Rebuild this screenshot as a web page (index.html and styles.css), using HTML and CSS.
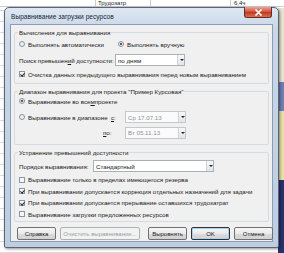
FILE: index.html
```html
<!DOCTYPE html>
<html lang="ru">
<head>
<meta charset="utf-8">
<title>Выравнивание загрузки ресурсов</title>
<link rel="stylesheet" href="styles.css">
</head>
<body>
<div class="sheet">
  <div class="sheet-head">
    <span class="cell c-a"></span>
    <span class="cell c-b">Трудозатр</span>
    <span class="cell c-c"></span>
    <span class="cell c-d">6,4ч</span>
  </div>
  <div class="sheet-right"></div>
</div>

<div class="window">
  <div class="titlebar">
    <span class="title">Выравнивание загрузки ресурсов</span>
    <span class="close"><svg width="9" height="7" viewBox="0 0 9 7"><path d="M1.5 0.5 L7.5 6.5 M7.5 0.5 L1.5 6.5" stroke="#fff" stroke-width="1.6"/></svg></span>
  </div>
  <div class="client">
    <fieldset class="group g1">
      <legend>Вычисления для выравнивания</legend>
      <div class="row">
        <label class="opt w-auto"><span class="radio"></span>Выполнять автоматически</label>
        <label class="opt"><span class="radio on"></span>Выполнять вручную</label>
      </div>
      <div class="row row-field">
        <span class="lbl w-search">Поиск превышен<u>и</u>й доступности:</span>
        <span class="select s-days"><span class="val">по дням</span><span class="arrow"></span></span>
      </div>
      <div class="row">
        <label class="opt"><span class="check on"></span>Очистка данных предыдущего выравнивания перед новым выравниванием</label>
      </div>
    </fieldset>

    <fieldset class="group g2">
      <legend>Диапазон выравнивания для проекта "Пример Курсовая"</legend>
      <div class="row">
        <label class="opt"><span class="radio on"></span>Выравнивание во все<u>м</u> проекте</label>
      </div>
      <div class="row row-field">
        <label class="opt w-range"><span class="radio"></span>Выравнивание в диапазоне</label>
        <span class="lbl w-from"><u>с</u>:</span>
        <span class="select s-date disabled"><span class="val">Ср 17.07.13</span><span class="arrow"></span></span>
      </div>
      <div class="row row-field r-to">
        <span class="spacer w-range-to"></span>
        <span class="lbl w-to"><u>п</u>о:</span>
        <span class="select s-date disabled"><span class="val">Вт 05.11.13</span><span class="arrow"></span></span>
      </div>
    </fieldset>

    <fieldset class="group g3">
      <legend>Устранение превышений доступности</legend>
      <div class="row row-field">
        <span class="lbl w-order">Порядок выравнивания:</span>
        <span class="select s-order"><span class="val">Стандартный</span><span class="arrow"></span></span>
      </div>
      <div class="checks">
        <label class="opt"><span class="check"></span>Выравнивание только в пределах имеющегося резерва</label>
        <label class="opt"><span class="check on"></span>При выравнивании допускается коррекция отдельных назначений для задачи</label>
        <label class="opt"><span class="check on"></span>При выравнивании допускается прерывание оставшихся трудозатрат</label>
        <label class="opt"><span class="check"></span>Выравнивание загрузки предложенных ресурсов</label>
      </div>
    </fieldset>

    <div class="buttons">
      <span class="btn b-help">Справка</span>
      <span class="btn b-clear disabled">Очистить выравнивание...</span>
      <span class="grow"></span>
      <span class="btn b-level">Выровнять</span>
      <span class="btn b-ok default">OK</span>
      <span class="btn b-cancel">Отмена</span>
    </div>
  </div>
</div>
</body>
</html>
```

FILE: styles.css
```css
* { box-sizing: border-box; }
html, body { margin: 0; padding: 0; }
body {
  width: 284px;
  height: 253px;
  overflow: hidden;
  position: relative;
  font-family: "Liberation Sans", Arial, sans-serif;
  font-size: 6.2px;
  color: #1a1a1a;
  background-color: #fff;
  background-image:
    repeating-linear-gradient(to bottom, transparent 0, transparent 10px, #d8dde4 10px, #d8dde4 11px);
}

.sheet { position: absolute; inset: 0; }
.sheet-head {
  display: flex;
  height: 7px;
  border-bottom: 1px solid #c9ced6;
  background: #fff;
  font-size: 6px;
  line-height: 7px;
}
.cell { border-right: 1px solid #c9ced6; padding-left: 2px; overflow: hidden; white-space: nowrap; }
.c-a { width: 96px; }
.c-b { width: 55px; }
.c-c { width: 80px; }
.c-d { width: 53px; border-right: none; padding-left: 3px; }
.sheet-right {
  position: absolute;
  right: 0; top: 8px; bottom: 0;
  width: 6px;
  background: linear-gradient(to bottom, #e9e6cf 0, #e9e6cf 30%, #6f7fb3 30%, #6f7fb3 42%, #e8e2a8 42%, #e8e2a8 70%, #27316b 70%, #27316b 100%);
}

.window {
  position: absolute;
  left: 4px;
  top: 7px;
  width: 275px;
  border: 1px solid #5c6470;
  border-radius: 5px 5px 2px 2px;
  background: linear-gradient(to bottom, #dfe8f3 0, #c9d7e8 20px, #bdcde2 100%);
  box-shadow: 1px 1px 3px rgba(0,0,0,0.45);
  padding: 0 5px 5px 5px;
  display: flex;
  flex-direction: column;
}
.titlebar {
  height: 16px;
  display: flex;
  align-items: center;
  position: relative;
}
.title {
  font-size: 6.6px;
  color: #1b2533;
  padding-left: 1px;
  padding-top: 1px;
}
.close {
  position: absolute;
  right: 1px;
  top: -1px;
  width: 28px;
  height: 11px;
  border: 1px solid #6b2b24;
  border-top: none;
  border-radius: 0 0 3px 3px;
  background: linear-gradient(to bottom, #e9a597 0, #d5563f 45%, #c03a22 55%, #d8714f 100%);
  display: flex;
  align-items: center;
  justify-content: center;
}
.client {
  background: #f0f0f0;
  border: 1px solid #8c9cb3;
  padding: 4px 3px 1px 3px;
  display: flex;
  flex-direction: column;
}

.group {
  margin: 0;
  border: 1px solid #d5dbe0;
  border-radius: 2px;
  padding: 0 6px 0 4px;
  min-width: 0;
}
.group legend {
  padding: 0 1px;
  margin-left: -1px;
  font-size: 6.2px;
  line-height: 7px;
}
.g1 { padding-top: 2px; padding-bottom: 3px; }
.g1 .row-field { margin-top: 2px; }
.g2 { margin-top: 4px; padding-top: 0; padding-bottom: 4px; }
.g2 .row-field { margin-top: 2px; }
.g2 .r-to { margin-top: 0; height: 15px; }
.g3 { margin-top: 4px; padding-top: 2px; padding-bottom: 1px; }

.row {
  display: flex;
  align-items: center;
  height: 12px;
  white-space: nowrap;
}
.row-field { height: 16px; }
.opt { display: flex; align-items: center; white-space: nowrap; }
.lbl, .opt, .spacer { flex: none; }
.w-auto { width: 99px; }
.w-search { width: 96px; }
.w-range { width: 92px; }
.w-from { width: 14px; }
.w-range-to { width: 84px; }
.w-to { width: 22px; }
.w-order { width: 74px; }
.spacer { display: block; }

.radio {
  width: 6px; height: 6px;
  border: 1px solid #8a96a5;
  border-radius: 50%;
  background: radial-gradient(circle, #f4f6f8 0, #dfe3e8 100%);
  margin-right: 3px;
  display: flex; align-items: center; justify-content: center;
  flex: none;
}
.radio.on::after {
  content: "";
  width: 2px; height: 2px;
  border-radius: 50%;
  background: #1b2b3a;
}
.check {
  width: 6px; height: 6px;
  border: 1px solid #8a96a5;
  background: #f6f7f8;
  margin-right: 3px;
  flex: none;
  position: relative;
}
.check.on::after {
  content: "";
  position: absolute;
  left: 1px; top: 0px;
  width: 1.5px; height: 3px;
  border-right: 1.2px solid #222;
  border-bottom: 1.2px solid #222;
  transform: rotate(40deg);
}

.select {
  height: 12px;
  border: 1px solid #a9b0b8;
  background: #fff;
  display: flex;
  align-items: center;
  padding-left: 2px;
  position: relative;
  flex: none;
}
.select .val { flex: 1; }
.select .arrow {
  width: 7px; height: 10px;
  border-left: 1px solid #cfd4da;
  background: linear-gradient(to bottom, #f7f8f9, #e2e5e9);
  position: relative;
}
.select .arrow::after {
  content: "";
  position: absolute;
  left: 1.5px; top: 4px;
  border-left: 2px solid transparent;
  border-right: 2px solid transparent;
  border-top: 2px solid #222;
}
.s-days { width: 70px; }
.s-date { width: 61px; }
.s-order { width: 121px; }
.disabled { color: #8d9196; }
.select.disabled { border-color: #c4c8cd; background: #fbfbfb; }

.checks { display: flex; flex-direction: column; }
.checks .opt { height: 11.5px; }

.buttons {
  display: flex;
  align-items: center;
  gap: 4px;
  margin-top: 5px;
  height: 13px;
  padding: 0 2px 0 3px;
}
.grow { flex: 1; }
.btn {
  height: 13px;
  border: 1px solid #707070;
  border-radius: 2px;
  background: linear-gradient(to bottom, #f6f6f6 0, #eaeaea 50%, #dcdcdc 51%, #d2d2d2 100%);
  display: flex;
  align-items: center;
  justify-content: center;
  font-size: 6px;
  white-space: nowrap;
  flex: none;
}
.b-help { width: 39px; }
.b-clear { width: 80px; }
.b-level { width: 39px; }
.b-ok { width: 39px; }
.b-cancel { width: 39px; }
.btn.disabled { border-color: #adb2b5; color: #9a9da0; background: #f2f2f2; }
.btn.default { border-color: #2f3338; box-shadow: inset 0 0 0 1px #a8d2ef; }
```
